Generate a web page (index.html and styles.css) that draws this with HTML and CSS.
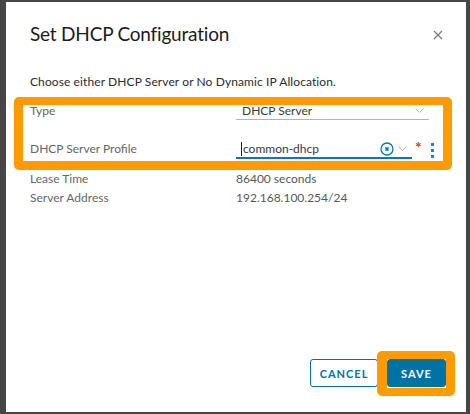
FILE: index.html
```html
<!DOCTYPE html>
<html lang="en">
<head>
<meta charset="utf-8">
<title>Set DHCP Configuration</title>
<link rel="stylesheet" href="styles.css">
</head>
<body>
<div class="modal">
  <div class="modal-header">
    <h3 class="modal-title">Set DHCP Configuration</h3>
    <button class="close" aria-label="Close">
      <svg width="10" height="10" viewBox="0 0 10 10"><path d="M1 1 L9 9 M9 1 L1 9" stroke="#747474" stroke-width="1.1" fill="none"/></svg>
    </button>
  </div>
  <p class="desc">Choose either DHCP Server or No Dynamic IP Allocation.</p>
  <div class="form">
    <div class="field-row">
      <div class="label">Type</div>
      <div class="select">
        <span class="value">DHCP Server</span>
        <svg class="chev" width="9" height="5" viewBox="0 0 9 5"><path d="M0.5 0.5 L4.5 4.5 L8.5 0.5" stroke="#b8b8b8" stroke-width="1" fill="none"/></svg>
      </div>
    </div>
    <div class="field-row second">
      <div class="label">DHCP Server Profile</div>
      <div class="input">
        <span class="value"><span class="caret"></span>common-dhcp</span>
        <span class="icons">
          <svg width="14" height="14" viewBox="0 0 14 14"><circle cx="7" cy="7" r="6" stroke="#0079b8" stroke-width="1.3" fill="none"/><path d="M5.4 5.4 L8.6 8.6 M8.6 5.4 L5.4 8.6" stroke="#0079b8" stroke-width="1.5" fill="none"/></svg>
          <svg class="chev" width="9" height="5" viewBox="0 0 9 5"><path d="M0.5 0.5 L4.5 4.5 L8.5 0.5" stroke="#b8b8b8" stroke-width="1" fill="none"/></svg>
        </span>
      </div>
      <span class="req">*</span>
      <span class="kebab"><i></i><i></i><i></i></span>
    </div>
    <div class="static-row first">
      <div class="label">Lease Time</div>
      <div class="text">86400 seconds</div>
    </div>
    <div class="static-row">
      <div class="label">Server Address</div>
      <div class="text">192.168.100.254/24</div>
    </div>
  </div>
  <div class="footer">
    <button class="btn btn-outline">CANCEL</button>
    <button class="btn btn-primary">SAVE</button>
  </div>
  <div class="hl hl-form"></div>
  <div class="hl hl-save"></div>
</div>
</body>
</html>
```
FILE: styles.css
```css
* { box-sizing: border-box; }
html, body {
  margin: 0;
  padding: 0;
}
body {
  width: 470px;
  height: 414px;
  background: #464646;
  font-family: "Lato", "Liberation Sans", sans-serif;
  overflow: hidden;
}
.modal {
  position: relative;
  width: 460px;
  height: 410px;
  margin: 2px 0 0 6px;
  background: #fff;
  display: flex;
  flex-direction: column;
  padding: 20px 20px 25px 24px;
}
.modal-header {
  display: flex;
  justify-content: space-between;
  align-items: center;
  height: 24px;
}
.modal-title {
  margin: 0;
  font-size: 19px;
  line-height: 24px;
  font-weight: 400;
  letter-spacing: -0.2px;
  color: #1b1b1b;
}
.close {
  border: 0;
  background: none;
  padding: 0;
  margin-right: 3px;
  margin-top: 2px;
  width: 10px;
  height: 10px;
  display: flex;
}
.desc {
  margin: 28px 0 0 0;
  font-size: 12px;
  line-height: 16px;
  letter-spacing: 0.1px;
  color: #2b2b2b;
}
.form {
  margin-top: 12px;
  font-size: 12px;
}
.field-row {
  display: flex;
  align-items: flex-start;
}
.field-row.second {
  margin-top: 20px;
}
.label {
  width: 206px;
  flex: none;
  line-height: 17px;
  color: #666;
}
.select, .input {
  display: flex;
  align-items: center;
  justify-content: space-between;
  height: 18px;
  padding: 0 5px 0 6px;
  color: #3a3a3a;
}
.select {
  width: 193px;
  border-bottom: 1px solid #b3b3b3;
}
.input {
  width: 176px;
  height: 19px;
  border-bottom: 2px solid #0079b8;
  padding-left: 5px;
}
.value {
  line-height: 17px;
  display: flex;
  align-items: center;
}
.caret {
  display: inline-block;
  width: 1px;
  height: 14px;
  background: #222;
  margin-right: 1px;
}
.icons {
  display: flex;
  align-items: center;
  gap: 4px;
}
.chev { display: block; }
.req {
  margin-left: 3px;
  color: #e8400c;
  font-size: 16px;
  line-height: 14px;
  font-weight: 700;
}
.kebab {
  margin-left: 9px;
  display: flex;
  flex-direction: column;
  gap: 3px;
  padding-top: 3px;
}
.kebab i {
  display: block;
  width: 3px;
  height: 3px;
  background: #1a86c8;
}
.static-row {
  display: flex;
  line-height: 19px;
}
.static-row.first {
  margin-top: 10px;
}
.static-row .label { line-height: 19px; }
.text { color: #575757; }
.footer {
  margin-top: auto;
  display: flex;
  justify-content: flex-end;
  gap: 9px;
}
.btn {
  height: 28px;
  font-family: "Lato", "Liberation Sans", sans-serif;
  font-size: 11px;
  font-weight: 700;
  letter-spacing: 1px;
  border-radius: 3px;
  padding: 0;
  text-align: center;
}
.btn-outline {
  width: 68px;
  background: #fff;
  color: #0072a3;
  border: 1px solid #0072a3;
}
.btn-primary {
  width: 59px;
  background: #0072a3;
  color: #fff;
  border: 1px solid #0072a3;
}
.hl {
  position: absolute;
  border: 9px solid #ff9a00;
  border-top-width: 8px;
  border-radius: 5px;
}
.hl-form {
  left: 8px;
  top: 95px;
  width: 438px;
  height: 73px;
}
.hl-save {
  left: 371px;
  top: 349px;
  width: 78px;
  height: 45px;
  border-width: 8px 9px 8px 10px;
}
```
